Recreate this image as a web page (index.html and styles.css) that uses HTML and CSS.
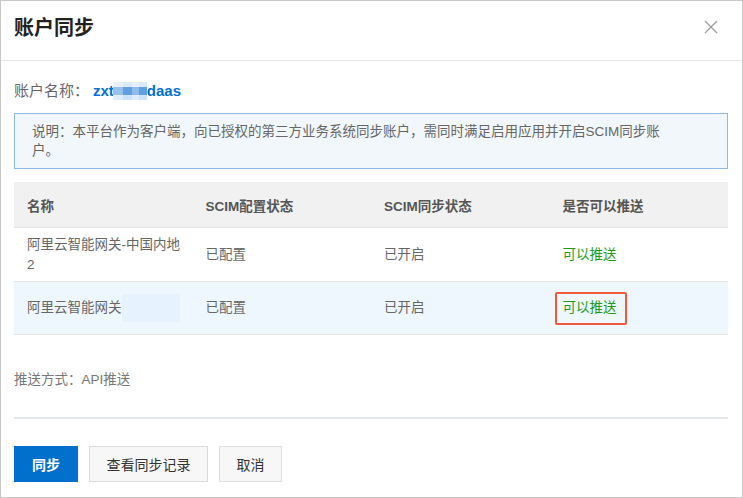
FILE: index.html
```html
<!DOCTYPE html>
<html lang="zh-CN">
  <head>
    <meta charset="UTF-8" />
    <title>账户同步</title>
    <link rel="stylesheet" href="styles.css">
  </head>
  <body>
    <div class="dialog">
      <div class="dialog-header">
        <h2 class="dialog-title">账户同步</h2>
        <button class="close-button" aria-label="关闭">
          <svg width="14" height="14" viewBox="0 0 14 14">
            <path d="M1 1 L13 13 M13 1 L1 13" stroke="#9a9a9a" stroke-width="1.2" fill="none" />
          </svg>
        </button>
      </div>

      <div class="dialog-body">
        <div class="account-line">
          <span class="account-label">账户名称：</span>
          <span class="account-name">zxt<span class="mosaic"></span>daas</span>
        </div>

        <div class="notice">
          说明：本平台作为客户端，向已授权的第三方业务系统同步账户，需同时满足启用应用并开启SCIM同步账户。
        </div>

        <table class="app-table">
          <thead>
            <tr>
              <th>名称</th>
              <th>SCIM配置状态</th>
              <th>SCIM同步状态</th>
              <th>是否可以推送</th>
            </tr>
          </thead>
          <tbody>
            <tr class="row-1">
              <td>阿里云智能网关-中国内地2</td>
              <td>已配置</td>
              <td>已开启</td>
              <td><span class="ok">可以推送</span></td>
            </tr>
            <tr class="row-2 is-hover">
              <td>阿里云智能网关<span class="masked"></span></td>
              <td>已配置</td>
              <td>已开启</td>
              <td><span class="ok mark">可以推送</span></td>
            </tr>
          </tbody>
        </table>

        <div class="push-type">推送方式：API推送</div>

        <div class="divider"></div>

        <div class="actions">
          <button class="btn btn-primary">同步</button>
          <button class="btn">查看同步记录</button>
          <button class="btn">取消</button>
        </div>
      </div>
    </div>
  </body>
</html>
```

FILE: styles.css
```css
body {
  margin: 0;
  background-color: #fff;
  font-family: "Liberation Sans", "Noto Sans CJK SC", sans-serif;
  color: #333;
}
.dialog {
  width: 743px;
  height: 498px;
  box-sizing: border-box;
  border: 1px solid #c8c8c8;
  background-color: #fff;
}
.dialog-header {
  height: 51px;
  border-bottom: 1px solid #e5e5e5;
  display: flex;
  align-items: center;
  justify-content: space-between;
  padding: 0 24px 8px 13px;
}
.dialog-title {
  margin: 0;
  font-size: 20px;
  font-weight: bold;
  color: #222;
}
.close-button {
  background-color: transparent;
  border: none;
  padding: 0;
  width: 14px;
  height: 14px;
  cursor: pointer;
  display: flex;
}
.dialog-body {
  padding: 0 14px 0 13px;
}
.account-line {
  margin-top: 20px;
  line-height: 20px;
  display: flex;
  align-items: center;
}
.account-label {
  font-size: 15px;
  color: #666;
}
.account-name {
  margin-left: 4px;
  font-size: 15px;
  font-weight: bold;
  color: #0070cc;
  display: flex;
  align-items: center;
}
.mosaic {
  display: inline-block;
  width: 34px;
  height: 18px;
  margin-left: -1px;
  background:
    linear-gradient(to right, rgba(255,255,255,0.35) 0 30%, transparent 30% 55%, rgba(255,255,255,0.3) 55% 75%, transparent 75%),
    linear-gradient(to bottom, #dceafa 0 30%, #5f9fe2 30% 70%, #cfe3f8 70%);
}
.notice {
  margin-top: 12px;
  border: 1px solid #8dbbe6;
  background-color: #f2f7fc;
  padding: 8px 62px 8px 17px;
  font-size: 13.5px;
  line-height: 19px;
  color: #666;
}
.app-table {
  width: 100%;
  margin-top: 13px;
  border-collapse: collapse;
  table-layout: fixed;
  font-size: 13.5px;
}
.app-table th {
  height: 45px;
  background-color: #f1f1f1;
  border-bottom: 1px solid #e5e5e5;
  text-align: left;
  padding: 0 10px 0 13px;
  font-weight: bold;
  color: #555;
}
.app-table td {
  padding: 0 10px 0 13px;
  border-bottom: 1px solid #e5e5e5;
  color: #666;
  line-height: 20px;
  vertical-align: middle;
}
.row-1 td {
  height: 53px;
}
.row-2 td {
  height: 52px;
}
.is-hover td {
  background-color: #eff7fe;
}
.masked {
  display: inline-block;
  width: 58px;
  height: 28px;
  vertical-align: middle;
  background-color: #e6f2fd;
}
.ok {
  color: #1b9a1b;
}
.mark {
  display: inline-flex;
  align-items: center;
  height: 33px;
  box-sizing: border-box;
  margin-left: -8px;
  padding: 0 8px 0 6px;
  border: 2px solid #ef5a3c;
  border-radius: 2px;
}
.push-type {
  margin-top: 35px;
  font-size: 13.5px;
  line-height: 20px;
  color: #777;
}
.divider {
  margin-top: 27px;
  height: 2px;
  background-color: #e3e8ee;
}
.actions {
  margin-top: 27px;
  display: flex;
  gap: 11px;
}
.btn {
  height: 36px;
  min-width: 63px;
  padding: 0 16.5px;
  border: 1px solid #dcdcdc;
  background-color: #f7f7f7;
  color: #333;
  font-family: inherit;
  font-size: 14px;
  cursor: pointer;
}
.btn-primary {
  padding: 0 17px;
  background-color: #0070cc;
  border-color: #0070cc;
  color: #fff;
  font-weight: bold;
}
```
